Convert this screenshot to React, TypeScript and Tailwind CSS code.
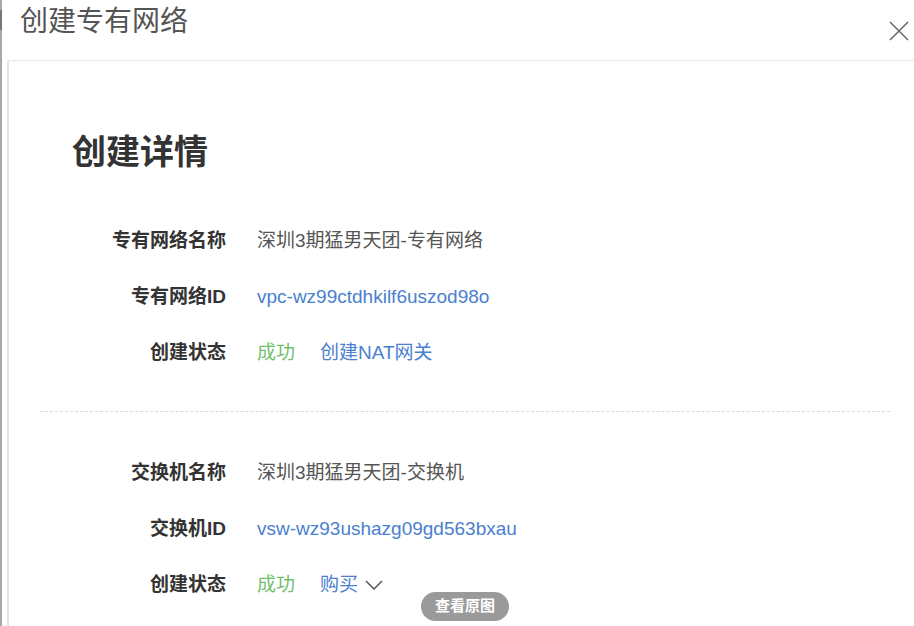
import React from "react";

const font = { fontFamily: '"Liberation Sans", "Noto Sans CJK SC", sans-serif' };

function Row({ label, children }: { label: string; children: React.ReactNode }) {
  return (
    <div className="flex h-[56px] items-center">
      <div className="w-[186px] text-right text-[19px] font-bold text-[#333]">{label}</div>
      <div className="ml-[31px] flex items-center text-[19px] text-[#555]">{children}</div>
    </div>
  );
}

export default function App() {
  return (
    <div className="relative flex h-[626px] w-[914px] overflow-hidden bg-white" style={font}>
      <div className="flex w-[2px] flex-col bg-[#a8a8a8]">
        <div className="mt-[10px] h-[20px] bg-[#777]" />
      </div>
      <div className="flex flex-1 flex-col">
        <div className="relative ml-[6px] h-[61px] border-b border-[#e8e8e8]">
          <div className="pl-[12px] pt-[5px] text-[28px] leading-[34px] text-[#555]">创建专有网络</div>
          <svg className="absolute left-[881px] top-[21px]" width="20" height="20" viewBox="0 0 20 20">
            <path d="M1 1 L19 19 M19 1 L1 19" stroke="#666" strokeWidth="1.5" fill="none" />
          </svg>
        </div>
        <div className="ml-[5px] flex-1 border-l-2 border-[#e3e3e3] pl-[31px] pr-[24px]">
          <div className="mt-[71px] pl-[32px] text-[34px] font-bold leading-[40px] text-[#333]">创建详情</div>
          <div className="mt-[41px]">
            <Row label="专有网络名称">深圳3期猛男天团-专有网络</Row>
            <Row label="专有网络ID">
              <span className="text-[#4a80cf]">vpc-wz99ctdhkilf6uszod98o</span>
            </Row>
            <Row label="创建状态">
              <span className="text-[#72bf6f]">成功</span>
              <span className="ml-[25px] text-[#4a80cf]">创建NAT网关</span>
            </Row>
          </div>
          <div className="mt-[30px] border-t border-dashed border-[#d8d8d8]" />
          <div className="mt-[33px]">
            <Row label="交换机名称">深圳3期猛男天团-交换机</Row>
            <Row label="交换机ID">
              <span className="text-[#4a80cf]">vsw-wz93ushazg09gd563bxau</span>
            </Row>
            <Row label="创建状态">
              <span className="text-[#72bf6f]">成功</span>
              <span className="ml-[25px] text-[#4a80cf]">购买</span>
              <svg className="ml-[7px]" width="18" height="10" viewBox="0 0 18 10">
                <path d="M1 1 L9 9 L17 1" stroke="#555" strokeWidth="1.5" fill="none" />
              </svg>
            </Row>
          </div>
        </div>
      </div>
      <div className="absolute left-[421px] top-[592px] flex h-[29px] w-[88px] items-center justify-center rounded-full bg-[#9a9a9a] text-[15px] font-bold text-white">
        查看原图
      </div>
    </div>
  );
}
